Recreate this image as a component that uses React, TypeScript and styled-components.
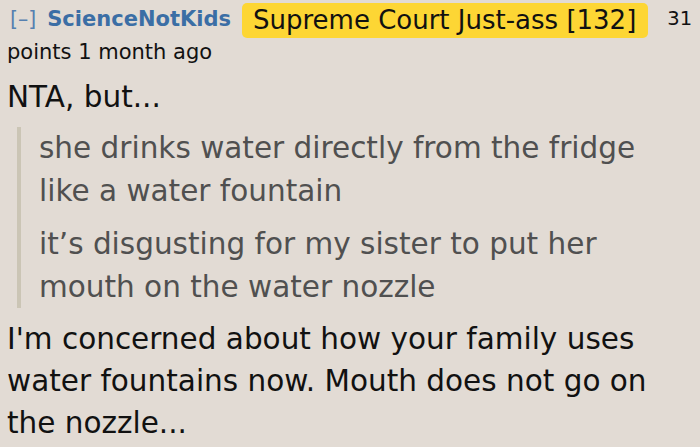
import React from "react";
import styled, { createGlobalStyle } from "styled-components";

const GlobalStyle = createGlobalStyle`
  html, body {
    margin: 0;
    padding: 0;
    background: #e2dbd4;
  }
  body {
    font-family: "DejaVu Sans", Verdana, sans-serif;
    color: #111;
  }
`;

const Comment = styled.article`
  width: 700px;
  height: 447px;
  overflow: hidden;
  padding: 0 0 0 7px;
  box-sizing: border-box;
`;

const Tagline = styled.div`
  display: flex;
  align-items: flex-start;
  height: 39px;
  white-space: nowrap;
`;

const Expand = styled.span`
  padding: 7px 0 0 3px;
  font-size: 20.5px;
  line-height: 24px;
  color: #5680b0;
  margin-right: 11px;
`;

const Author = styled.span`
  padding-top: 7px;
  font-size: 21px;
  line-height: 24px;
  font-weight: bold;
  color: #3b6ea5;
`;

const Flair = styled.span`
  margin: 3px 0 0 11px;
  height: 35px;
  background: #fdd634;
  border-radius: 5px;
  padding: 0 12px 0 11px;
  font-size: 26px;
  line-height: 35px;
  color: #111;
`;

const Score = styled.span`
  padding-top: 7px;
  margin-left: 19px;
  font-size: 19.5px;
  line-height: 24px;
  color: #111;
`;

const Meta = styled.div`
  font-size: 21px;
  line-height: 26px;
`;

const Body = styled.div`
  margin-top: 12px;
`;

const Para = styled.p`
  margin: 0;
  font-size: 29.5px;
  line-height: 40px;
`;

const Quote = styled.blockquote`
  margin: 10px 24px 0 10px;
  padding: 0 0 0 18px;
  border-left: 4px solid #cbc5b5;
  color: #505050;
`;

const QuoteLine = styled.p<{ $gap?: boolean }>`
  margin: ${(p) => (p.$gap ? "11px" : "0")} 0 0 0;
  font-size: 29.5px;
  line-height: 42.5px;
`;

const Reply = styled.p`
  margin: 10px 0 0 0;
  font-size: 29.5px;
  line-height: 42px;
`;

export default function App() {
  return (
    <>
      <GlobalStyle />
      <Comment>
        <Tagline>
          <Expand>[–]</Expand>
          <Author>ScienceNotKids</Author>
          <Flair>Supreme Court Just-ass [132]</Flair>
          <Score>31</Score>
        </Tagline>
        <Meta>points 1 month ago</Meta>
        <Body>
          <Para>NTA, but...</Para>
          <Quote>
            <QuoteLine>
              she drinks water directly from the fridge like a water fountain
            </QuoteLine>
            <QuoteLine $gap>
              it’s disgusting for my sister to put her mouth on the water
              nozzle
            </QuoteLine>
          </Quote>
          <Reply>
            I'm concerned about how your family uses water fountains now.
            Mouth does not go on the nozzle...
          </Reply>
        </Body>
      </Comment>
    </>
  );
}
